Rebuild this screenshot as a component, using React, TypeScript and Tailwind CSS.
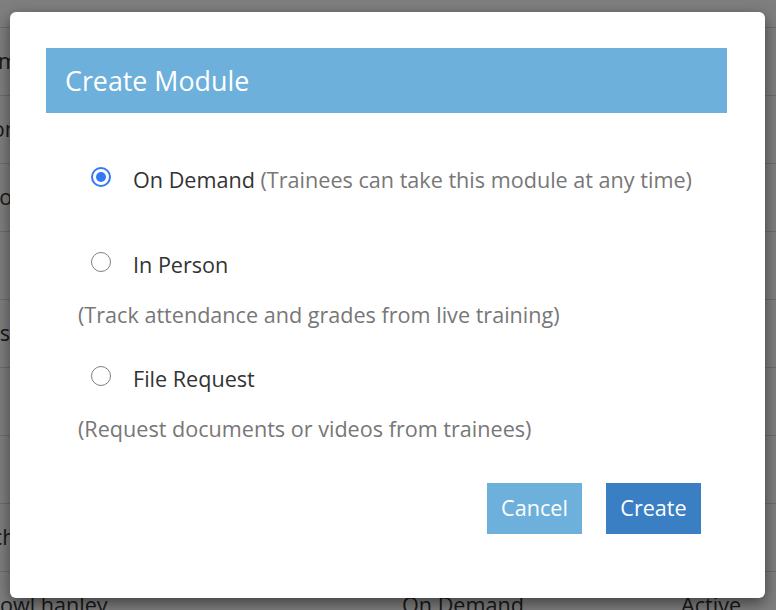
import React, { useState } from "react";

type ModuleKind = "on-demand" | "in-person" | "file-request";

interface Row {
  name: string;
  kind: string;
  status: string;
}

// rows of the module list that sits behind the dialog
const rows: Row[] = [
  { name: "Emma Walsh", kind: "On Demand", status: "Active" },
  { name: "Jonah Reid", kind: "In Person", status: "Active" },
  { name: "Rosa Lindt", kind: "On Demand", status: "Active" },
  { name: "", kind: "File Request", status: "Draft" },
  { name: "Ashley Ford", kind: "On Demand", status: "Active" },
  { name: "", kind: "In Person", status: "Active" },
  { name: "", kind: "On Demand", status: "Draft" },
  { name: "Ichabod Crane", kind: "File Request", status: "Active" },
  { name: "Bowl hanley", kind: "On Demand", status: "Active" },
];

const Radio: React.FC<{ checked: boolean; onClick: () => void }> = ({
  checked,
  onClick,
}) => (
  <button
    type="button"
    onClick={onClick}
    className={`mt-[1.5px] flex h-[20px] w-[20px] shrink-0 items-center justify-center rounded-full bg-white ${
      checked ? "border-2 border-[#3478f6]" : "border-[1.5px] border-[#808080]"
    }`}
  >
    {checked && <span className="h-[10px] w-[10px] rounded-full bg-[#3478f6]" />}
  </button>
);

const App: React.FC = () => {
  const [kind, setKind] = useState<ModuleKind>("on-demand");

  return (
    <div
      className="relative h-[610px] w-full overflow-hidden bg-white text-[21.6px] text-[#333]"
      style={{ fontFamily: '"Open Sans", "Noto Sans", sans-serif' }}
    >
      {/* Module table */}
      <div className="-mt-[56px] -ml-[14px]">
        <div className="flex h-[84px] items-center border-b border-[#ddd]">
          <div className="w-[416px]">Employee</div>
          <div className="w-[279px]">Training Type</div>
          <div>Status</div>
        </div>
        {rows.map((r, i) => (
          <div key={i} className="flex h-[68px] items-center border-b border-[#ddd]">
            <div className="w-[416px]">{r.name}</div>
            <div className="w-[279px]">{r.kind}</div>
            <div>{r.status}</div>
          </div>
        ))}
      </div>

      {/* Dialog */}
      <div className="absolute inset-0 bg-black/50 pt-[12px] pl-[10px]">
        <div className="w-[755px] rounded-[6px] bg-white pt-[36px] pr-[38px] pb-[64px] pl-[36px] shadow-[0_5px_15px_rgba(0,0,0,0.5)]">
          <div className="flex h-[65px] items-center bg-[#6cb0db] px-[19px]">
            <h2 className="text-[26.8px] leading-[36px] text-white">Create Module</h2>
          </div>

          <div className="mt-[52px] leading-[30px]">
            <div className="flex items-start gap-[22px] pl-[45px]">
              <Radio checked={kind === "on-demand"} onClick={() => setKind("on-demand")} />
              <span>
                On Demand{" "}
                <span className="text-[#777]">(Trainees can take this module at any time)</span>
              </span>
            </div>

            <div className="mt-[55px] flex items-start gap-[22px] pl-[45px]">
              <Radio checked={kind === "in-person"} onClick={() => setKind("in-person")} />
              <span>In Person</span>
            </div>
            <p className="mt-[20px] pl-[32px] text-[#777]">
              (Track attendance and grades from live training)
            </p>

            <div className="mt-[34px] flex items-start gap-[22px] pl-[45px]">
              <Radio checked={kind === "file-request"} onClick={() => setKind("file-request")} />
              <span>File Request</span>
            </div>
            <p className="mt-[20px] pl-[32px] text-[#777]">
              (Request documents or videos from trainees)
            </p>
          </div>

          <div className="mt-[39px] flex justify-end gap-[24px] pr-[26px]">
            <button className="h-[51px] w-[95px] bg-[#6cb0db] text-white">Cancel</button>
            <button className="h-[51px] w-[95px] bg-[#3a7fc4] text-white">Create</button>
          </div>
        </div>
      </div>
    </div>
  );
};

export default App;
